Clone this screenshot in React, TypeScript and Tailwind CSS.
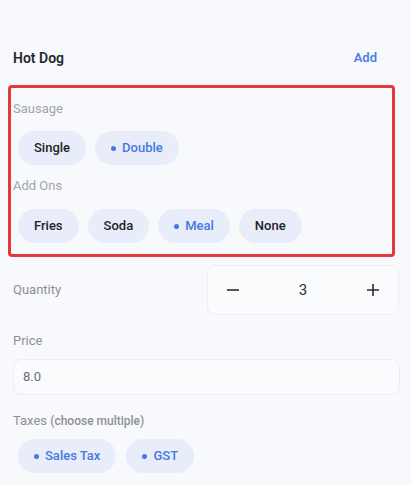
import React from "react";

function Chip({ label, selected }: { label: string; selected?: boolean }) {
  return (
    <div
      className={
        "h-[34px] px-[16px] rounded-full bg-[#e8edf9] flex items-center gap-[6px] text-[13px] font-medium " +
        (selected ? "text-[#4479e3]" : "text-[#222428]")
      }
    >
      {selected && <span className="w-[5px] h-[5px] rounded-full bg-[#4479e3]" />}
      <span>{label}</span>
    </div>
  );
}

export default function App() {
  return (
    <div
      className="w-[411px] h-[485px] bg-[#f8f9fc] overflow-hidden"
      style={{ fontFamily: "Roboto, 'Noto Sans', sans-serif" }}
    >
      <div className="pt-[48px] pl-[13px] pr-[34px] h-[68px] flex items-center justify-between">
        <span className="text-[14px] font-semibold text-[#26282c] leading-[20px]">Hot Dog</span>
        <span className="text-[13px] font-semibold text-[#4a80e6] leading-[20px]">Add</span>
      </div>

      <div className="mt-[17px] ml-[8px] w-[387px] border-[3px] border-[#e5383b] rounded-[4px] pt-[12px] pb-[11px] pl-[2px]">
        <div className="text-[13px] leading-[18px] text-[#a2a4a8]">Sausage</div>
        <div className="mt-[13px] pl-[5px] flex gap-[9px]">
          <Chip label="Single" />
          <Chip label="Double" selected />
        </div>
        <div className="mt-[12px] text-[13px] leading-[18px] text-[#a2a4a8]">Add Ons</div>
        <div className="mt-[14px] pl-[5px] flex gap-[9px]">
          <Chip label="Fries" />
          <Chip label="Soda" />
          <Chip label="Meal" selected />
          <Chip label="None" />
        </div>
      </div>

      <div className="mt-[8px] pl-[13px] pr-[12px] flex items-center justify-between">
        <span className="text-[13px] text-[#8e9095]">Quantity</span>
        <div className="w-[192px] h-[50px] rounded-[8px] border border-[#eceef2] bg-[#fafbfd] flex items-center justify-between px-[18px] text-[#2a2c30]">
          <svg width="14" height="14" viewBox="0 0 14 14">
            <path d="M1 7h12" stroke="#2a2c30" strokeWidth="1.6" />
          </svg>
          <span className="text-[15px]">3</span>
          <svg width="14" height="14" viewBox="0 0 14 14">
            <path d="M1 7h12M7 1v12" stroke="#2a2c30" strokeWidth="1.6" />
          </svg>
        </div>
      </div>

      <div className="mt-[17px] pl-[13px] text-[13px] leading-[18px] text-[#8e9095]">Price</div>
      <div className="mt-[9px] ml-[13px] w-[387px] h-[36px] rounded-[8px] border border-[#eceef2] bg-[#fafbfd] flex items-center px-[9px] text-[13px] text-[#6b6d72]">
        8.0
      </div>

      <div className="mt-[17px] pl-[13px] text-[13px] leading-[18px] text-[#8e9095]">
        Taxes <span className="text-[12px] font-medium">(choose multiple)</span>
      </div>
      <div className="mt-[9px] pl-[18px] flex gap-[10px]">
        <Chip label="Sales Tax" selected />
        <Chip label="GST" selected />
      </div>
    </div>
  );
}
